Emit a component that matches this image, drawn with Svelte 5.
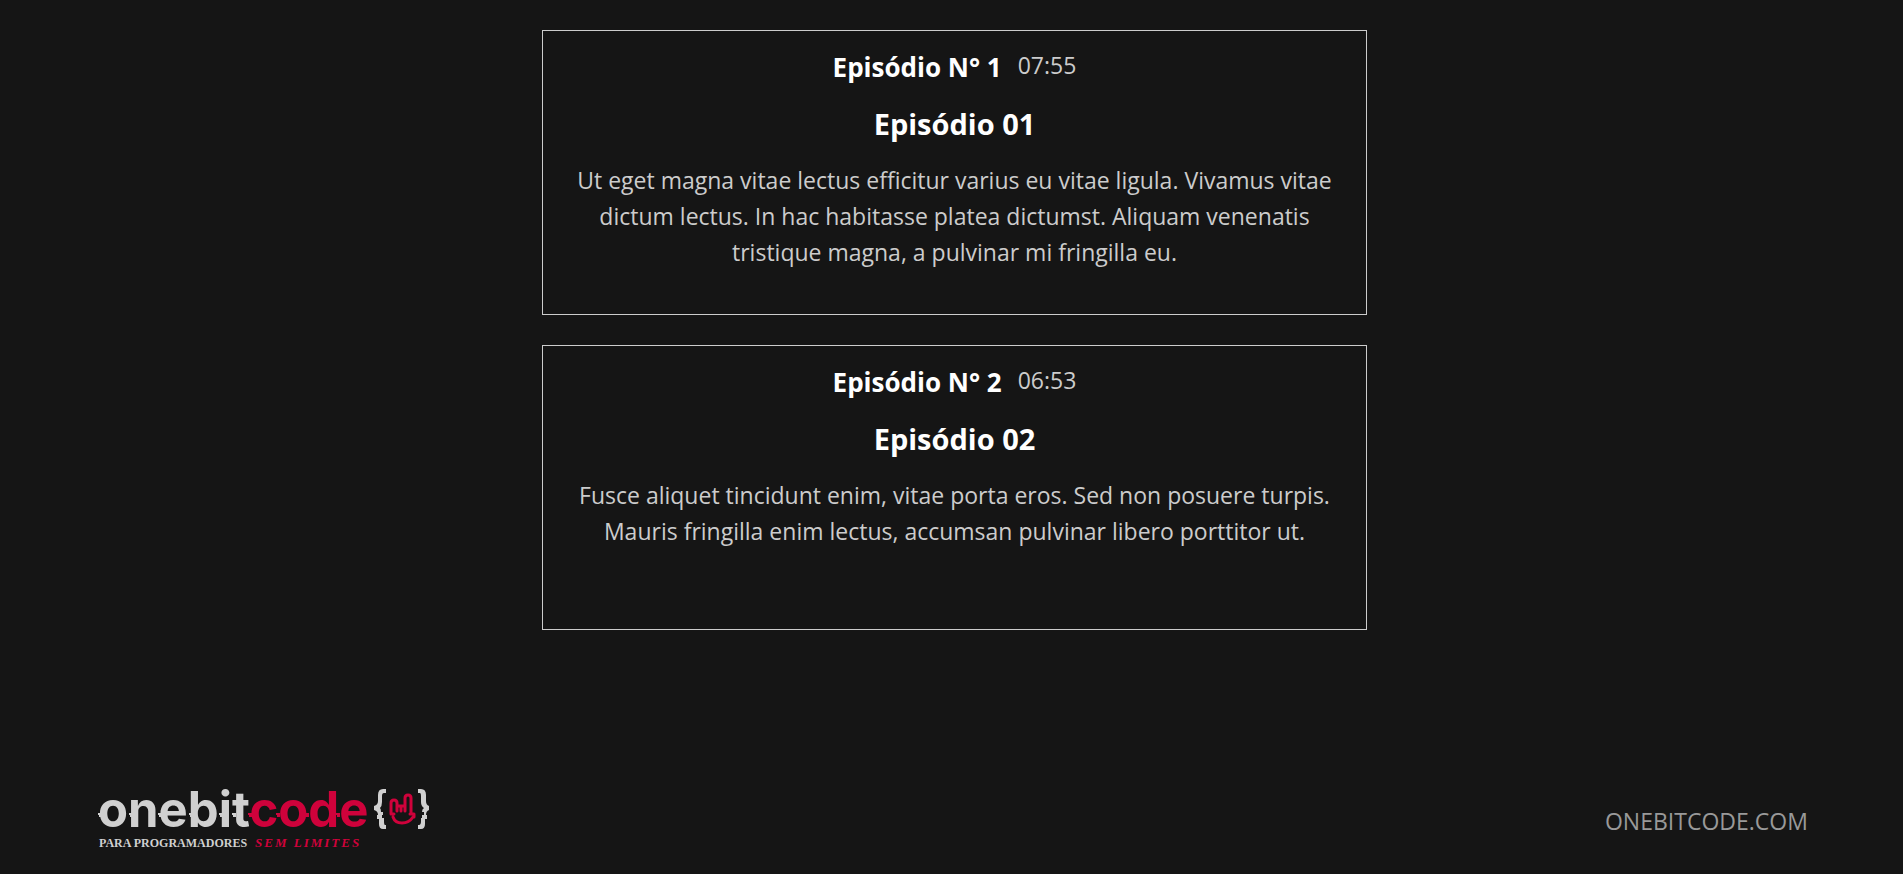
<script>
  const episodes = [
    {
      number: 1,
      time: '07:55',
      title: 'Episódio 01',
      synopsis:
        'Ut eget magna vitae lectus efficitur varius eu vitae ligula. Vivamus vitae dictum lectus. In hac habitasse platea dictumst. Aliquam venenatis tristique magna, a pulvinar mi fringilla eu.'
    },
    {
      number: 2,
      time: '06:53',
      title: 'Episódio 02',
      synopsis:
        'Fusce aliquet tincidunt enim, vitae porta eros. Sed non posuere turpis. Mauris fringilla enim lectus, accumsan pulvinar libero porttitor ut.'
    }
  ];

  // Places where the wordmark's sliced band sticks out of a letter.
  const lightSlices = [3, 34, 63, 94, 124, 137];
  const redSlices = [153, 181, 210, 241];
</script>

<div class="page">
  <main class="episodes">
    {#each episodes as episode (episode.number)}
      <article class="card">
        <div class="heading">
          <h2 class="number">Episódio N° {episode.number}</h2>
          <span class="time">{episode.time}</span>
        </div>
        <h3 class="title">{episode.title}</h3>
        <p class="synopsis">{episode.synopsis}</p>
      </article>
    {/each}
  </main>

  <footer class="footer">
    <svg class="logo" viewBox="0 0 336 82" role="img" aria-label="onebitcode">
      <text class="word" x="3" y="47"><tspan class="light">onebit</tspan><tspan class="red">code</tspan></text>
      {#each lightSlices as x}
        <path class="light" d={`M${x} 33h4v4h-3v-2h-1z`} />
      {/each}
      {#each redSlices as x}
        <path class="red" d={`M${x} 33h4v4h-3v-2h-1z`} />
      {/each}
      <path class="light" d="M291 9v4h-2q-2 0-2 3v6q0 4-2 6 1 1 1 4h2v3h-1v3h2v3q0 4 1 4h1v4h-3q-4 0-4-5v-5h-2v-4h1q0-4-4-5v-4q4-1 4-5v-6q0-6 5-6z" />
      <path class="light" d="M323 9v4h2q1 0 1 3v6q0 4 3 6-2 1-2 4h2v3h-2v3h-1v3q0 4-2 4h-1v4h3q4 0 4-5v-5h2v-4h-1q0-4 3-5v-4q-3-1-3-5v-6q0-6-5-6z" />
      <path class="hand" d="M296 34V23q0-3 3-3t3 3v8M302 26h8M306 26v5M310 31V18q0-3 3-3t3 3v15M296 34h3M315 34h4v3M298 37q2 6 9 6t11-6" />
      <text class="tag light" x="4" y="67">PARA PROGRAMADORES</text>
      <text class="tag slant red" x="160" y="67">SEM LIMITES</text>
    </svg>
    <a class="site" href="https://onebitcode.com">ONEBITCODE.COM</a>
  </footer>
</div>

<style>
  :global(body) {
    margin: 0;
    background: #151515;
  }

  .page {
    display: flex;
    flex-direction: column;
    min-height: 100vh;
    box-sizing: border-box;
    padding: 30px 0 12px;
    background: #151515;
    color: #ccc;
    font-family: "Segoe UI", "Open Sans", sans-serif;
    font-size: 23px;
    line-height: 36px;
  }

  .episodes {
    display: flex;
    flex-direction: column;
    align-items: center;
    gap: 30px;
    padding-left: 6px;
  }

  .card {
    box-sizing: border-box;
    width: 100%;
    max-width: 825px;
    min-height: 285px;
    padding: 16px 30px;
    border: 1px solid #ccc;
    text-align: center;
  }

  .heading {
    display: flex;
    justify-content: center;
    gap: 16px;
  }

  h2,
  h3,
  p {
    margin: 0;
  }

  .number,
  .title {
    color: #fff;
    font-weight: 700;
  }

  .number {
    font-size: 26px;
    line-height: 40px;
  }

  .title {
    margin-top: 16px;
    font-size: 29px;
    line-height: 42px;
  }

  .synopsis {
    margin-top: 17px;
  }

  .footer {
    display: flex;
    align-items: center;
    justify-content: space-between;
    margin-top: auto;
    padding: 0 5%;
  }

  .logo {
    display: block;
    width: 336px;
    height: 82px;
    overflow: visible;
  }

  .word {
    font: 700 49px/1 Inter, sans-serif;
  }

  .tag {
    font: 700 12px/1 "Liberation Serif", serif;
  }

  .slant {
    font-size: 13px;
    font-style: italic;
    letter-spacing: 2px;
  }

  .light {
    fill: #d0d0d0;
  }

  .red {
    fill: #cf023b;
  }

  .hand {
    fill: none;
    stroke: #cf023b;
    stroke-width: 3;
    stroke-linecap: round;
    stroke-linejoin: round;
  }

  .site {
    color: #999;
    text-decoration: none;
  }
</style>
